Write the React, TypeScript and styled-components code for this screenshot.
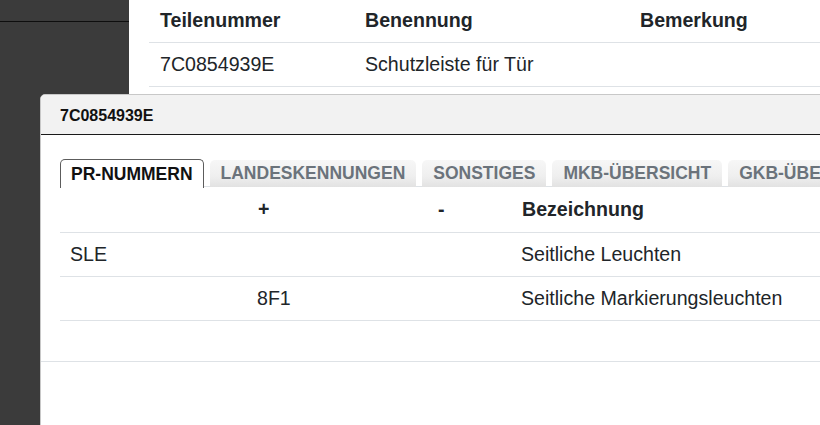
import React from "react";
import styled, { createGlobalStyle } from "styled-components";

const GlobalStyle = createGlobalStyle`
  html, body { margin: 0; padding: 0; }
  body {
    font-family: "Liberation Sans", Arial, sans-serif;
    color: #212529;
    background: #ffffff;
  }
  * { box-sizing: border-box; }
`;

const Page = styled.div`
  position: relative;
  display: flex;
  width: 820px;
  height: 425px;
  overflow: hidden;
`;

const Sidebar = styled.aside`
  width: 129px;
  flex-shrink: 0;
  background: #3b3b3b;
`;

const SidebarTop = styled.div`
  height: 22px;
  border-bottom: 1px solid #0e0e0e;
`;

const Main = styled.main`
  flex: 1;
  background: #ffffff;
  padding-left: 20px;
`;

const Table = styled.table`
  border-collapse: collapse;
  width: 100%;
  table-layout: fixed;
  font-size: 19.6px;
`;

const HeadCell = styled.th<{ $w?: number; $h?: number }>`
  text-align: left;
  font-weight: bold;
  padding: 0 10px 0 11px;
  height: ${(p) => (p.$h ? p.$h : 42)}px;
  width: ${(p) => (p.$w ? `${p.$w}px` : "auto")};
  border-bottom: 1px solid #dee2e6;
  white-space: nowrap;
  vertical-align: middle;
`;

const Cell = styled.td`
  padding: 0 10px 0 11px;
  height: 44px;
  border-bottom: 1px solid #dee2e6;
  white-space: nowrap;
  vertical-align: middle;
`;

const InnerCell = styled(Cell)`
  padding-left: 10px;
`;

const Modal = styled.div`
  position: absolute;
  left: 40px;
  top: 94px;
  right: -30px;
  bottom: -30px;
  background: #ffffff;
  border: 1px solid #c8c8c8;
  border-radius: 5px 0 0 0;
  display: flex;
  flex-direction: column;
  overflow: hidden;
`;

const ModalHeader = styled.div`
  height: 40px;
  flex-shrink: 0;
  display: flex;
  align-items: center;
  padding: 2px 19px 0;
  background: #f2f2f2;
  border-bottom: 1px solid #1a1a1a;
  font-size: 16px;
  font-weight: bold;
  color: #111;
`;

const ModalBody = styled.div`
  padding: 24px 0 40px 19px;
`;

const TabBar = styled.div`
  display: flex;
  gap: 6px;
  height: 28px;
  border-bottom: 1px solid #dee2e6;
  white-space: nowrap;
`;

const Tab = styled.div<{ $active?: boolean }>`
  flex-shrink: 0;
  height: ${(p) => (p.$active ? 29 : 27)}px;
  margin-top: ${(p) => (p.$active ? 0 : 1)}px;
  padding: 0 ${(p) => (p.$active ? 10 : 11)}px;
  display: flex;
  align-items: center;
  font-size: 17.5px;
  font-weight: bold;
  text-transform: uppercase;
  border-radius: 5px 5px 0 0;
  color: ${(p) => (p.$active ? "#111111" : "#6b737b")};
  background: ${(p) =>
    p.$active ? "#ffffff" : "linear-gradient(#f7f7f7 0%, #efefef 60%, #e2e2e2 100%)"};
  border: ${(p) => (p.$active ? "1px solid #5c5c5c" : "none")};
  border-bottom: none;
  position: relative;
  z-index: ${(p) => (p.$active ? 1 : 0)};
`;

const ModalFooter = styled.div`
  flex: 1;
  border-top: 1px solid #dee2e6;
`;

const parts = [{ nr: "7C0854939E", name: "Schutzleiste für Tür", note: "" }];

const prRows = [
  { code: "SLE", plus: "", minus: "", label: "Seitliche Leuchten" },
  { code: "", plus: "8F1", minus: "", label: "Seitliche Markierungsleuchten" },
];

const tabs = ["PR-Nummern", "Landeskennungen", "Sonstiges", "MKB-Übersicht", "GKB-Übersicht"];

export default function App() {
  return (
    <>
      <GlobalStyle />
      <Page>
        <Sidebar>
          <SidebarTop />
        </Sidebar>
        <Main>
          <Table>
            <thead>
              <tr>
                <HeadCell $w={205} $h={42}>Teilenummer</HeadCell>
                <HeadCell $w={275} $h={42}>Benennung</HeadCell>
                <HeadCell $h={42}>Bemerkung</HeadCell>
              </tr>
            </thead>
            <tbody>
              {parts.map((p) => (
                <tr key={p.nr}>
                  <Cell>{p.nr}</Cell>
                  <Cell>{p.name}</Cell>
                  <Cell>{p.note}</Cell>
                </tr>
              ))}
            </tbody>
          </Table>
        </Main>
        <Modal>
          <ModalHeader>7C0854939E</ModalHeader>
          <ModalBody>
            <TabBar>
              {tabs.map((t, i) => (
                <Tab key={t} $active={i === 0}>
                  {t}
                </Tab>
              ))}
            </TabBar>
            <Table>
              <thead>
                <tr>
                  <HeadCell $w={187} $h={45}></HeadCell>
                  <HeadCell $w={180} $h={45}>+</HeadCell>
                  <HeadCell $w={84} $h={45}>-</HeadCell>
                  <HeadCell $h={45}>Bezeichnung</HeadCell>
                </tr>
              </thead>
              <tbody>
                {prRows.map((r, i) => (
                  <tr key={i}>
                    <InnerCell>{r.code}</InnerCell>
                    <InnerCell>{r.plus}</InnerCell>
                    <InnerCell>{r.minus}</InnerCell>
                    <InnerCell>{r.label}</InnerCell>
                  </tr>
                ))}
              </tbody>
            </Table>
          </ModalBody>
          <ModalFooter />
        </Modal>
      </Page>
    </>
  );
}
